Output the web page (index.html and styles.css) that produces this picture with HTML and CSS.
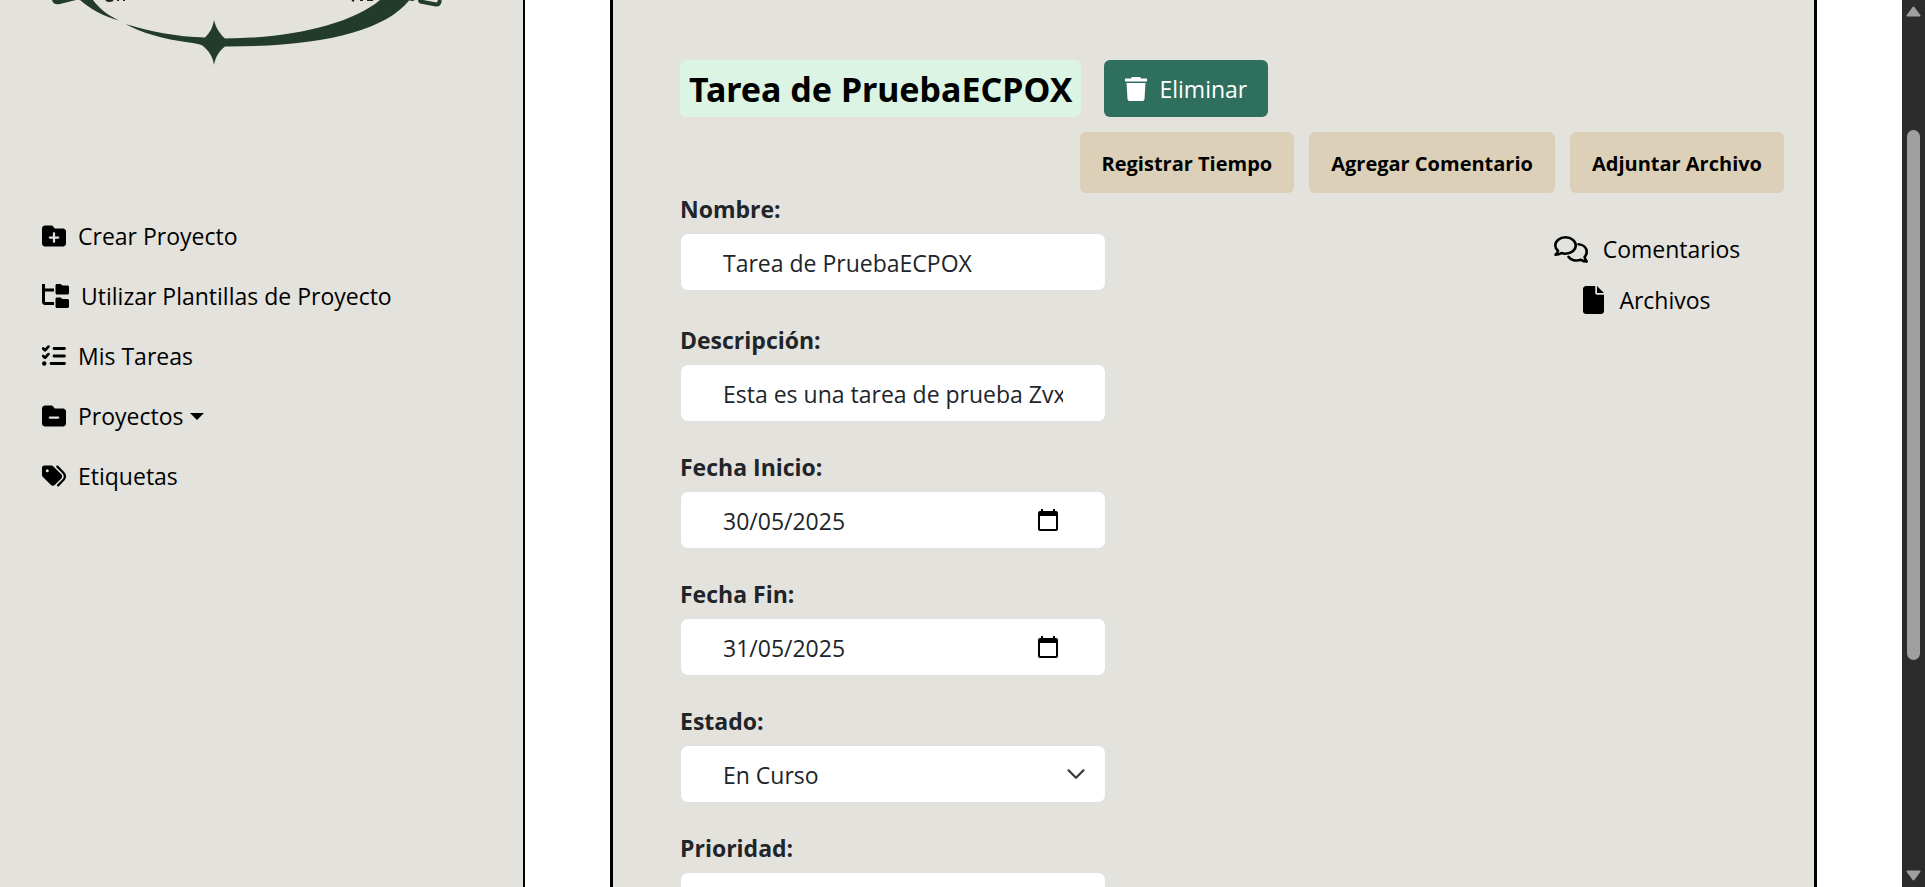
FILE: index.html
```html
<!DOCTYPE html>
<html lang="es">
<head>
<meta charset="utf-8">
<meta name="viewport" content="width=device-width, initial-scale=1">
<title>Tarea de PruebaECPOX</title>
<link rel="stylesheet" href="styles.css">
</head>
<body>
<div class="app">
  <aside class="sidebar">
    <svg class="logo" viewBox="0 0 523 80" aria-hidden="true">
      <g fill="#233b2a">
        <path d="M80 0C90 9 103 16 119 20.500C107 15 99 8 93 0Z"/>
        <path d="M125.500 24C148 31 177 37 205 37.500C210 33 213 27 214 20C215.500 27 219 33 225 38.500C290 38 350 25 380 0H409.500C384 32 318 47 225 46.500C219 51 215.500 57 214 65C213 57 209 51 203 46C200 44 196 43.500 189 42.500C163 39 142 33 125.500 24Z"/>
        <path d="M52 0C53 4 56 5 60 4L76 0Z"/>
        <path d="M409 0Q412 2 415 0Z"/>
      </g>
      <path d="M420 0Q420 2 423 2L436 4.500Q439 5 440 0" fill="none" stroke="#233b2a" stroke-width="4"/>
      <path d="M106 0Q109 2 113 0M118 0V1M124 0V1M352 0L354 1M360 0H363M367 0H373" fill="none" stroke="#222" stroke-width="2"/>
    </svg>
    <nav class="menu">
      <a class="menu-link" href="#">
        <svg class="icon" viewBox="0 0 512 512" aria-hidden="true"><path d="M512 416c0 35.300-28.700 64-64 64H64c-35.300 0-64-28.700-64-64V96C0 60.700 28.700 32 64 32H192c20.100 0 39.100 9.500 51.200 25.600l19.200 25.600c6 8.100 15.500 12.800 25.600 12.800H448c35.300 0 64 28.700 64 64V416zM232 376c0 13.300 10.700 24 24 24s24-10.700 24-24V312h64c13.300 0 24-10.700 24-24s-10.700-24-24-24H280V200c0-13.300-10.700-24-24-24s-24 10.700-24 24v64H168c-13.300 0-24 10.700-24 24s10.700 24 24 24h64v64z"/></svg>
        <span>Crear Proyecto</span>
      </a>
      <a class="menu-link" href="#">
        <svg class="icon icon-wide" viewBox="0 0 576 512" aria-hidden="true"><path d="M64 0H0v384c0 35.300 28.700 64 64 64H256V384H64V160H256V96H64V0zM288 192c0 17.700 14.300 32 32 32H544c17.700 0 32-14.300 32-32V64c0-17.700-14.300-32-32-32H445.300c-8.500 0-16.600-3.400-22.600-9.400L409.400 9.400c-6-6-14.100-9.400-22.600-9.400H320c-17.700 0-32 14.300-32 32V192zm0 288c0 17.700 14.300 32 32 32H544c17.700 0 32-14.300 32-32V352c0-17.700-14.300-32-32-32H445.300c-8.500 0-16.600-3.400-22.600-9.400l-13.300-13.300c-6-6-14.100-9.400-22.600-9.400H320c-17.700 0-32 14.300-32 32V480z"/></svg>
        <span>Utilizar Plantillas de Proyecto</span>
      </a>
      <a class="menu-link" href="#">
        <svg class="icon" viewBox="0 0 512 512" aria-hidden="true"><path d="M24 96l40 40 72-80M24 256l40 40 72-80M256 96H480M256 256H480M192 416H480" fill="none" stroke="#000" stroke-width="60" stroke-linecap="round" stroke-linejoin="round"/><circle cx="48" cy="416" r="48"/></svg>
        <span>Mis Tareas</span>
      </a>
      <a class="menu-link" href="#">
        <svg class="icon" viewBox="0 0 512 512" aria-hidden="true"><path d="M448 480H64c-35.300 0-64-28.700-64-64V96C0 60.700 28.700 32 64 32H192c20.100 0 39.100 9.500 51.200 25.600l19.200 25.600c6 8.100 15.500 12.800 25.600 12.800H448c35.300 0 64 28.700 64 64V416c0 35.300-28.700 64-64 64zM168 264c-13.300 0-24 10.700-24 24s10.700 24 24 24H344c13.300 0 24-10.700 24-24s-10.700-24-24-24H168z"/></svg>
        <span>Proyectos</span><span class="caret"></span>
      </a>
      <a class="menu-link" href="#">
        <svg class="icon" viewBox="0 0 512 512" aria-hidden="true"><path d="M345 39.100L472.800 168.400c52.400 53 52.400 138.200 0 191.200L360.800 472.900c-9.300 9.400-24.500 9.500-33.900 .2s-9.500-24.500-.2-33.900L438.600 325.900c33.900-34.300 33.900-89.400 0-123.700L310.900 72.900c-9.300-9.400-9.200-24.600 .2-33.900s24.600-9.200 33.900 .2zM0 229.500V80C0 53.500 21.500 32 48 32H197.500c17 0 33.300 6.700 45.300 18.700l168 168c25 25 25 65.500 0 90.500L277.300 442.700c-25 25-65.500 25-90.500 0l-168-168C6.700 262.700 0 246.500 0 229.500zM144 144a32 32 0 1 0 -64 0 32 32 0 1 0 64 0z"/></svg>
        <span>Etiquetas</span>
      </a>
    </nav>
  </aside>

  <main class="panel">
    <header class="heading">
      <h1 class="title">Tarea de PruebaECPOX</h1>
      <button class="delete" type="button">
        <svg class="icon-trash" viewBox="0 0 22 24" aria-hidden="true"><path d="M0 1.500H6L7 0H15L16 1.500H22V4.500H0ZM1.500 6H20.500L19.500 22Q19.300 24 17.500 24H4.500Q2.700 24 2.500 22Z" fill="#fff"/></svg>
        <span>Eliminar</span>
      </button>
    </header>
    <div class="actions">
      <button class="action" type="button">Registrar Tiempo</button>
      <button class="action" type="button">Agregar Comentario</button>
      <button class="action" type="button">Adjuntar Archivo</button>
    </div>
    <div class="content">
      <form class="form">
        <div class="field field-first">
          <label class="label" for="nombre">Nombre:</label>
          <input class="input" id="nombre" type="text" value="Tarea de PruebaECPOX">
        </div>
        <div class="field">
          <label class="label" for="descripcion">Descripción:</label>
          <input class="input" id="descripcion" type="text" value="Esta es una tarea de prueba Zvxvxcv">
        </div>
        <div class="field">
          <label class="label" for="inicio">Fecha Inicio:</label>
          <div class="control">
            <input class="input" id="inicio" type="text" value="30/05/2025">
            <button class="picker" type="button" aria-label="Abrir calendario de inicio"><svg class="icon-calendar" viewBox="0 0 20 22" aria-hidden="true"><path d="M3 0H5V2H15V0H17V2H18Q20 2 20 4V20Q20 22 18 22H2Q0 22 0 20V4Q0 2 2 2H3ZM2 7V20H18V7Z" fill-rule="evenodd"/></svg></button>
          </div>
        </div>
        <div class="field">
          <label class="label" for="fin">Fecha Fin:</label>
          <div class="control">
            <input class="input" id="fin" type="text" value="31/05/2025">
            <button class="picker" type="button" aria-label="Abrir calendario de fin"><svg class="icon-calendar" viewBox="0 0 20 22" aria-hidden="true"><path d="M3 0H5V2H15V0H17V2H18Q20 2 20 4V20Q20 22 18 22H2Q0 22 0 20V4Q0 2 2 2H3ZM2 7V20H18V7Z" fill-rule="evenodd"/></svg></button>
          </div>
        </div>
        <div class="field">
          <label class="label" for="estado">Estado:</label>
          <div class="control">
            <select class="input" id="estado"><option>En Curso</option></select>
            <svg class="chevron" viewBox="0 0 16 16" aria-hidden="true"><path d="m2 5 6 6 6-6" fill="none" stroke="#343a40" stroke-width="1.800" stroke-linecap="round" stroke-linejoin="round"/></svg>
          </div>
        </div>
        <div class="field">
          <label class="label" for="prioridad">Prioridad:</label>
          <select class="input" id="prioridad"><option></option></select>
        </div>
      </form>
      <nav class="links">
        <a class="link" href="#">
          <svg class="icon-comments" viewBox="0 0 34 27" aria-hidden="true"><g fill="none" stroke="#000" stroke-width="2.600" stroke-linejoin="round" stroke-linecap="round"><path d="M4 14.800C2 13 1.300 11 1.300 9.500C1.300 5 5.700 1.300 11.500 1.300S21.700 5 21.700 9.500S17.300 17.700 11.500 17.700C9.900 17.700 8.700 17.500 7.500 17C5.500 18.300 3.500 18.800 1.500 18.800C3 17.500 3.800 16.500 4 14.800Z"/><path d="M24.500 8.300C29.500 8.700 32.700 12 32.700 16C32.700 18 32 19.500 30.600 21C31 23 32 24.500 32.700 25.500C30.500 25.500 28.500 24.800 27 23.800C22 25.500 16.500 24 14.500 20.800"/></g></svg>
          <span>Comentarios</span>
        </a>
        <a class="link" href="#">
          <svg class="icon-file" viewBox="0 0 384 512" aria-hidden="true"><path d="M0 56C0 25 25 0 56 0H224V128c0 17.700 14.300 32 32 32H384V456c0 31-25 56-56 56H56c-31 0-56-25-56-56V56zm384 72H256V0L384 128z"/></svg>
          <span>Archivos</span>
        </a>
      </nav>
    </div>
  </main>

  <div class="scrollbar" aria-hidden="true">
    <svg class="arrow" viewBox="0 0 15 11"><path d="M7.500 1.500L13.500 9.500H1.500Z" fill="#9f9f9f" stroke="#9f9f9f" stroke-width="2" stroke-linejoin="round"/></svg>
    <div class="track"><div class="thumb"></div></div>
    <svg class="arrow" viewBox="0 0 15 11"><path d="M7.500 9.500L13.500 1.500H1.500Z" fill="#9f9f9f" stroke="#9f9f9f" stroke-width="2" stroke-linejoin="round"/></svg>
  </div>
</div>
</body>
</html>
```
FILE: styles.css
```css
* { box-sizing: border-box; }

body {
  margin: 0;
  background: #fff;
  color: #212529;
  font-family: "Open Sans", "Noto Sans", sans-serif;
  font-size: 23px;
  line-height: 34px;
}

button, input, select { font: inherit; }

.app {
  display: flex;
  height: 100vh;
  overflow: hidden;
}

/* Sidebar */
.sidebar {
  flex: 0 0 525px;
  min-width: 0;
  background: #e3e2dd;
  border-right: 2px solid #000;
}

.logo {
  display: block;
  width: 100%;
}

.menu {
  display: flex;
  flex-direction: column;
  gap: 26px;
  padding: 139px 42px 0;
}

.menu-link {
  display: flex;
  align-items: center;
  gap: 12px;
  color: #000;
  text-decoration: none;
  white-space: nowrap;
}

.icon { width: 24px; height: 24px; }
.icon-wide { width: 27px; }

.caret {
  border: 7px solid transparent;
  border-top-color: #000;
  border-bottom: 0;
  margin-left: -6px;
}

/* Task panel */
.panel {
  flex: 1;
  margin: 0 85px;
  padding: 60px 30px 0 67px;
  background: #e3e2dd;
  border: solid #000;
  border-width: 0 3px;
}

.heading {
  display: flex;
  gap: 23px;
}

.title {
  margin: 0;
  padding: 1px 9px 0;
  border-radius: 6px;
  background: #dbf4e3;
  color: #000;
  font-family: "Noto Sans", "Open Sans", sans-serif;
  font-size: 34px;
  line-height: 56px;
}

.delete {
  display: flex;
  align-items: center;
  gap: 12px;
  padding: 0 21px;
  border: 0;
  border-radius: 6px;
  background: #2f6f5e;
  color: #fff;
}

.icon-trash { width: 22px; height: 24px; }

.actions {
  display: flex;
  justify-content: flex-end;
  gap: 15px;
  margin-top: 15px;
}

.action {
  height: 61px;
  padding: 2px 22px 0;
  border: 0;
  border-radius: 6px;
  background: #dcd1b8;
  color: #000;
  font-size: 20px;
  font-weight: 700;
}

.content {
  display: flex;
  justify-content: space-between;
}

.form {
  flex: 0 0 426px;
  display: flex;
  flex-direction: column;
  gap: 29px;
}

.field {
  display: flex;
  flex-direction: column;
  gap: 8px;
}

.field-first { margin-bottom: 4px; }

.label {
  font-weight: 700;
  line-height: 32px;
}

.input {
  width: 100%;
  height: 58px;
  padding: 2px 42px 0;
  border: 1px solid #dee2e6;
  border-radius: 8px;
  background: #fff;
  color: #212529;
  appearance: none;
}

.control {
  display: grid;
  align-items: center;
}

.control > * { grid-area: 1 / 1; }

.picker {
  justify-self: end;
  display: flex;
  margin-right: 48px;
  padding: 0;
  border: 0;
  background: none;
}

.icon-calendar { width: 20px; height: 22px; }

.chevron {
  justify-self: end;
  width: 20px;
  height: 20px;
  margin-right: 20px;
  pointer-events: none;
}

.links {
  flex: 0 0 274px;
  display: flex;
  flex-direction: column;
  align-items: center;
  gap: 17px;
  padding-top: 39px;
}

.link {
  display: flex;
  align-items: center;
  gap: 15px;
  color: #000;
  text-decoration: none;
}

.icon-comments { width: 34px; height: 27px; }
.icon-file { width: 21px; height: 28px; }

/* Scrollbar */
.scrollbar {
  flex: 0 0 23px;
  display: flex;
  flex-direction: column;
  align-items: center;
  padding: 6px 0;
  background: #2c2c2c;
}

.arrow { width: 15px; height: 11px; }

.track {
  flex: 1;
  padding: 113px 0 210px;
}

.thumb {
  width: 13px;
  height: 100%;
  border-radius: 7px;
  background: #9f9f9f;
}
```
